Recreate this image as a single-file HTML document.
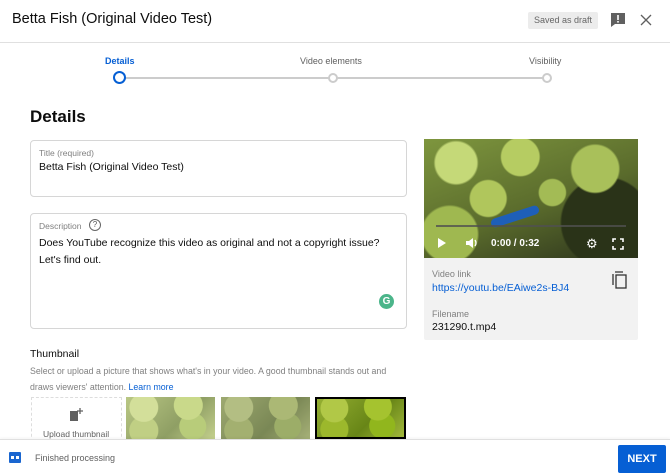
<!DOCTYPE html>
<html><head><meta charset="utf-8"><style>
*{margin:0;padding:0;box-sizing:border-box}
body{width:670px;height:474px;overflow:hidden;background:#fff;font-family:"Liberation Sans",Arial,sans-serif;color:#0d0d0d;position:relative}
.a{position:absolute}
.box{position:absolute;border:1px solid #d6d6d6;border-radius:4px}
.lbl{font-size:9px;color:#808080}
.thumb{position:absolute;top:397px;height:42px;background:radial-gradient(circle at 20% 25%,#d3df9a 0 18%,transparent 19%),radial-gradient(circle at 70% 20%,#c9d98a 0 20%,transparent 21%),radial-gradient(circle at 75% 70%,#b8cc7a 0 18%,transparent 19%),radial-gradient(circle at 20% 80%,#c0cf84 0 18%,transparent 19%),linear-gradient(135deg,#b9c784,#8f9f64 60%,#c4d08d)}
</style></head><body>
<div class="a" style="left:12px;top:11px;font-size:14.5px">Betta Fish (Original Video Test)</div>
<div class="a" style="left:528px;top:12px;width:70px;height:17px;background:#ececec;border-radius:2px;font-size:9px;color:#666;text-align:center;line-height:17px">Saved as draft</div>
<svg class="a" style="left:610px;top:12px" width="16" height="16" viewBox="0 0 16 16"><path d="M1 1h14v11H5l-4 3z" fill="#606060"/><rect x="7.2" y="3" width="1.6" height="5" fill="#fff"/><rect x="7.2" y="9" width="1.6" height="1.6" fill="#fff"/></svg>
<svg class="a" style="left:640px;top:14px" width="12" height="12" viewBox="0 0 12 12"><path d="M1 1L11 11M11 1L1 11" stroke="#606060" stroke-width="1.3"/></svg>
<div class="a" style="left:0;top:42px;width:670px;height:1px;background:#e0e0e0"></div>
<div class="a" style="left:105px;top:56px;font-size:9px;color:#065fd4;font-weight:bold">Details</div>
<div class="a" style="left:300px;top:56px;font-size:9px;color:#606060">Video elements</div>
<div class="a" style="left:529px;top:56px;font-size:9px;color:#606060">Visibility</div>
<div class="a" style="left:120px;top:77px;width:428px;height:2px;background:#ccc"></div>
<div class="a" style="left:113px;top:71px;width:13px;height:13px;border:2.5px solid #065fd4;border-radius:50%;background:#fff"></div>
<div class="a" style="left:328px;top:73px;width:10px;height:10px;border:2px solid #ccc;border-radius:50%;background:#fff"></div>
<div class="a" style="left:542px;top:73px;width:10px;height:10px;border:2px solid #ccc;border-radius:50%;background:#fff"></div>
<div class="a" style="left:30px;top:107px;font-size:17px;font-weight:bold">Details</div>
<div class="box" style="left:30px;top:140px;width:377px;height:57px"></div>
<div class="a lbl" style="left:39px;top:148px;font-size:8.5px">Title (required)</div>
<div class="a" style="left:39px;top:161px;font-size:10.5px">Betta Fish (Original Video Test)</div>
<div class="box" style="left:30px;top:213px;width:377px;height:116px"></div>
<div class="a lbl" style="left:39px;top:221px;font-size:8.5px">Description</div>
<div class="a" style="left:89px;top:219px;width:12px;height:12px;border:1px solid #666;border-radius:50%;font-size:8px;text-align:center;line-height:10px;color:#555">?</div>
<div class="a" style="left:39px;top:235px;font-size:10.5px;line-height:17px">Does YouTube recognize this video as original and not a copyright issue?<br>Let's find out.</div>
<div class="a" style="left:379px;top:294px;width:15px;height:15px;border-radius:50%;background:#4bb58a;color:#fff;font-size:10px;text-align:center;line-height:15px;font-weight:bold">G</div>
<div class="a" style="left:30px;top:348px;font-size:10.5px">Thumbnail</div>
<div class="a" style="left:30px;top:363px;font-size:8.8px;color:#808080;line-height:16px">Select or upload a picture that shows what's in your video. A good thumbnail stands out and<br>draws viewers' attention. <span style="color:#065fd4">Learn more</span></div>
<div class="a" style="left:31px;top:397px;width:91px;height:45px;border:1px dashed #ddd"></div>
<svg class="a" style="left:69px;top:408px" width="14" height="14" viewBox="0 0 14 14"><path d="M1 3h8v10H1z" fill="#606060"/><path d="M11 0v6M8 3h6" stroke="#606060" stroke-width="1.3"/></svg>
<div class="a" style="left:43px;top:429px;font-size:8.5px;color:#606060">Upload thumbnail</div>
<div class="thumb" style="left:126px;width:89px"></div>
<div class="thumb" style="left:221px;width:89px;filter:brightness(.85)"></div>
<div class="thumb" style="left:315px;width:91px;border:2px solid #111;filter:saturate(1.8) brightness(.8) contrast(1.3)"></div>
<div class="a" style="left:424px;top:139px;width:214px;height:201px;background:#f2f2f2;border-radius:2px"></div>
<div class="a" style="left:424px;top:139px;width:214px;height:119px;background:radial-gradient(circle at 15% 20%,#c5d978 0 10%,transparent 11%),radial-gradient(circle at 45% 15%,#b6cc62 0 12%,transparent 13%),radial-gradient(circle at 80% 25%,#a9c05a 0 12%,transparent 13%),radial-gradient(circle at 30% 50%,#b0c65c 0 11%,transparent 12%),radial-gradient(circle at 12% 80%,#9fb850 0 13%,transparent 14%),radial-gradient(circle at 60% 45%,#a3bb55 0 9%,transparent 10%),radial-gradient(circle at 85% 70%,#2a3318 0 22%,transparent 23%),linear-gradient(160deg,#7e963e,#5a6b2c 55%,#2b321c)"></div>
<div class="a" style="left:490px;top:212px;width:50px;height:9px;background:#1e5fb8;border-radius:5px;transform:rotate(-18deg)"></div>
<div class="a" style="left:436px;top:225px;width:190px;height:2px;background:rgba(80,80,80,.8)"></div>
<div class="a" style="left:438px;top:238px;width:0;height:0;border-left:8px solid #fff;border-top:5px solid transparent;border-bottom:5px solid transparent"></div>
<svg class="a" style="left:465px;top:237px" width="14" height="12" viewBox="0 0 14 12"><path d="M1 4h3l4-3v10L4 8H1z" fill="#fff"/><path d="M10 3q2 3 0 6" stroke="#fff" fill="none" stroke-width="1.3"/></svg>
<div class="a" style="left:491px;top:238px;color:#fff;font-size:10px;font-weight:bold">0:00 / 0:32</div>
<div class="a" style="left:586px;top:236px;color:#fff;font-size:13px">⚙</div>
<svg class="a" style="left:612px;top:238px" width="12" height="12" viewBox="0 0 12 12"><path d="M1 4V1h3M8 1h3v3M11 8v3H8M4 11H1V8" stroke="#fff" stroke-width="1.6" fill="none"/></svg>
<div class="a lbl" style="left:432px;top:269px">Video link</div>
<div class="a" style="left:432px;top:282px;font-size:10.5px;color:#065fd4">https://youtu.be/EAiwe2s-BJ4</div>
<svg class="a" style="left:612px;top:271px" width="16" height="18" viewBox="0 0 16 18"><path d="M3 1h8M1 3v11" stroke="#333" stroke-width="1.3" fill="none"/><rect x="4" y="4" width="10" height="13" fill="none" stroke="#333" stroke-width="1.3"/></svg>
<div class="a lbl" style="left:432px;top:309px">Filename</div>
<div class="a" style="left:432px;top:321px;font-size:10.5px">231290.t.mp4</div>
<div class="a" style="left:0;top:439px;width:670px;height:35px;background:#fff;border-top:1px solid #e0e0e0;box-shadow:0 -1px 3px rgba(0,0,0,.05)"></div>
<div class="a" style="left:9px;top:452px;width:12px;height:11px;background:#1a66d0;border-radius:1px"></div>
<div class="a" style="left:11px;top:456px;width:8px;height:3px;border-left:3px solid #fff;border-right:3px solid #fff"></div>
<div class="a" style="left:35px;top:453px;font-size:9px;color:#606060">Finished processing</div>
<div class="a" style="left:618px;top:445px;width:48px;height:28px;background:#065fd4;color:#fff;font-size:11px;font-weight:bold;text-align:center;line-height:28px;border-radius:2px">NEXT</div>
</body></html>
